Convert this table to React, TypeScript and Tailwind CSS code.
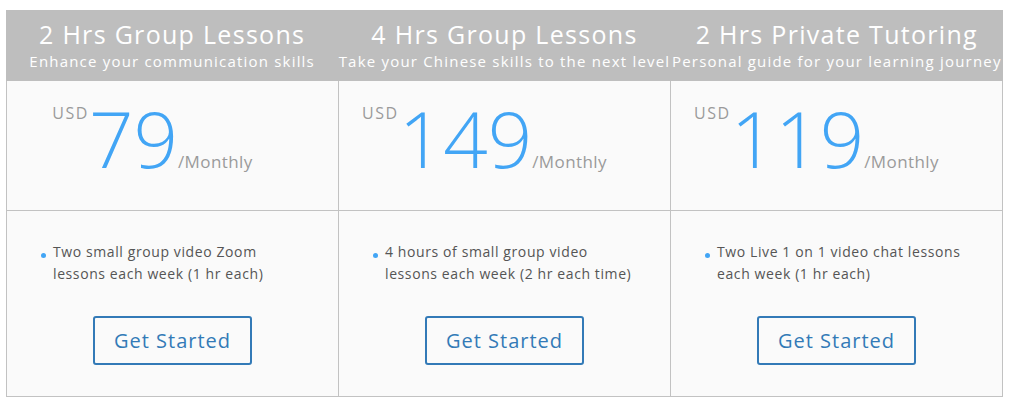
import React from "react";

interface Plan {
  title: string;
  subtitle: string;
  price: string;
  lines: string[];
}

const plans: Plan[] = [
  {
    title: "2 Hrs Group Lessons",
    subtitle: "Enhance your communication skills",
    price: "79",
    lines: ["Two small group video Zoom", "lessons each week (1 hr each)"],
  },
  {
    title: "4 Hrs Group Lessons",
    subtitle: "Take your Chinese skills to the next level",
    price: "149",
    lines: ["4 hours of small group video", "lessons each week (2 hr each time)"],
  },
  {
    title: "2 Hrs Private Tutoring",
    subtitle: "Personal guide for your learning journey",
    price: "119",
    lines: ["Two Live 1 on 1 video chat lessons", "each week (1 hr each)"],
  },
];

export default function App() {
  return (
    <div
      className="min-h-screen bg-white pt-[10px] pl-[6px]"
      style={{ fontFamily: '"Open Sans", "Liberation Sans", sans-serif' }}
    >
      <div className="w-[997px]">
        {/* header band */}
        <div className="grid grid-cols-3 bg-[#bebebe] h-[71px] text-white">
          {plans.map((p) => (
            <div key={p.title} className="flex flex-col items-center pt-[8px] whitespace-nowrap">
              <div className="text-[25px] leading-[32px] tracking-[1.3px]">{p.title}</div>
              <div className="text-[15px] leading-[20px] mt-[1px] tracking-[1.2px]">{p.subtitle}</div>
            </div>
          ))}
        </div>

        {/* body */}
        <div className="grid grid-cols-3 border-r border-b border-[#c2c2c2] bg-[#fafafa]">
          {plans.map((p) => (
            <div key={p.title} className="border-l border-[#c2c2c2]">
              {/* price */}
              <div className="h-[130px] flex justify-center items-start pr-[40px] pt-[23px] border-b border-[#c2c2c2]">
                <div className="flex items-baseline">
                  <span className="self-start text-[16px] text-[#9a9a9a] leading-none mt-[1px] tracking-[1.5px]">
                    USD
                  </span>
                  <span className="text-[78px] font-light text-[#42a5f5] leading-[68px]">{p.price}</span>
                  <span className="text-[17px] text-[#9a9a9a] leading-none tracking-[0.4px]">/Monthly</span>
                </div>
              </div>

              {/* features */}
              <div className="h-[185px] flex flex-col pt-[30px]">
                <div className="flex items-start pl-[34px]">
                  <span className="w-[5px] h-[5px] rounded-full bg-[#42a5f5] mt-[12px] mr-[7px] shrink-0" />
                  <div className="text-[14px] leading-[22px] text-[#555] tracking-[0.6px]">
                    {p.lines.map((l) => (
                      <div key={l}>{l}</div>
                    ))}
                  </div>
                </div>
                <div className="flex justify-center mt-[31px]">
                  <button className="w-[159px] h-[49px] border-2 border-[#337ab7] rounded-[3px] text-[20px] text-[#337ab7] bg-transparent tracking-[1px]">
                    Get Started
                  </button>
                </div>
              </div>
            </div>
          ))}
        </div>
      </div>
    </div>
  );
}
